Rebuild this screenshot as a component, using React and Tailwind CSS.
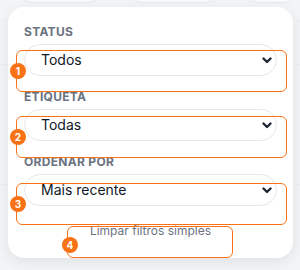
import React from "react";

function Chevron() {
  return (
    <svg width="10" height="7" viewBox="0 0 10 7" fill="none" className="shrink-0">
      <path d="M1.5 1.5 L5 5 L8.5 1.5" stroke="#1f2937" strokeWidth="2.4" strokeLinecap="round" strokeLinejoin="round" />
    </svg>
  );
}

function Field({ label, value, last }) {
  return (
    <div className={last ? "" : "mb-[13px]"}>
      <div className="text-xs leading-4 font-bold tracking-wide text-[#6b7280] uppercase mb-1">{label}</div>
      <div className="h-8 rounded-full border border-[#e5e7eb] bg-white flex items-center justify-between pl-4 pr-[4px] text-sm text-[#111827]">
        <span>{value}</span>
        <Chevron />
      </div>
    </div>
  );
}

function Box({ cls }) {
  return <div className={"absolute border-[1.5px] border-[#f97316] rounded-md pointer-events-none " + cls} />;
}

function Badge({ n, cls }) {
  return (
    <div className={"absolute w-4 h-4 rounded-full bg-[#f97316] text-white text-[10px] font-bold flex items-center justify-center leading-none " + cls}>
      {n}
    </div>
  );
}

export default function App() {
  return (
    <div className="relative w-[300px] h-[270px] overflow-hidden bg-[#f3f4f6]" style={{ fontFamily: "Inter, 'Noto Sans', sans-serif" }}>
      {/* background page */}
      <div className="flex gap-[22px] pl-[15px] -mt-[30px]">
        <div className="w-[93px] h-[33px] rounded-full bg-[#f9fafb] border border-[#e5e7eb]" />
        <div className="w-[100px] h-[33px] rounded-full bg-[#f9fafb] border border-[#e5e7eb]" />
        <div className="w-[60px] h-[33px] rounded-full bg-[#f9fafb] border border-[#e5e7eb]" />
      </div>
      <div className="mt-[17px] border-t border-[#eceef1]" />
      <div className="mt-[43px] border-t border-[#eceef1]" />
      <div className="mt-[119px] border-t border-[#eceef1]" />

      {/* popover */}
      <div className="absolute left-[8px] top-[7px] w-[285px] h-[251px] rounded-2xl bg-white shadow-[0_4px_14px_rgba(0,0,0,0.08)] px-4 pt-[17px]">
        <Field label="Status" value="Todos" />
        <Field label="Etiqueta" value="Todas" />
        <Field label="Ordenar por" value="Mais recente" last />
        <div className="flex justify-center mt-[13px]">
          <button className="w-[166px] py-1 text-xs leading-4 text-[#6b7280] text-center">Limpar filtros simples</button>
        </div>
      </div>

      {/* annotations */}
      <Box cls="left-[16px] top-[50px] w-[271px] h-[42px]" />
      <Box cls="left-[16px] top-[116px] w-[271px] h-[42px]" />
      <Box cls="left-[16px] top-[183px] w-[271px] h-[42px]" />
      <Box cls="left-[67px] top-[226px] w-[166px] h-[32px]" />
      <Badge n="1" cls="left-[10px] top-[63px]" />
      <Badge n="2" cls="left-[10px] top-[129px]" />
      <Badge n="3" cls="left-[10px] top-[196px]" />
      <Badge n="4" cls="left-[62px] top-[237px]" />
    </div>
  );
}
